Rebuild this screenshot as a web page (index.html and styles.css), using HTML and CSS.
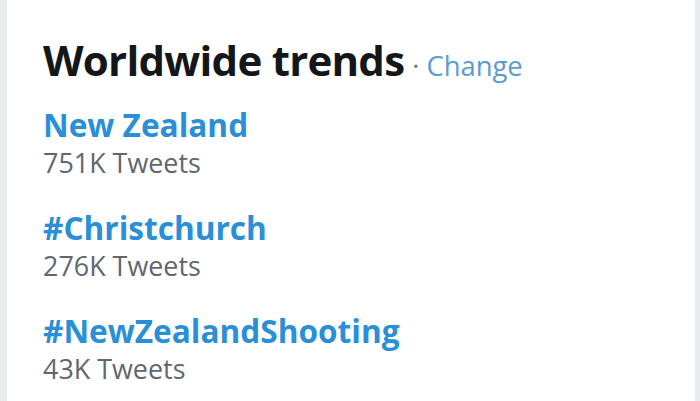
FILE: index.html
```html
<!DOCTYPE html>
<html lang="en">
<head>
    <meta charset="UTF-8">
    <title>Worldwide trends</title>
    <link rel="stylesheet" href="styles.css">
</head>
<body>
    <div class="card">
        <div class="card-header">
            <h2>Worldwide trends</h2>
            <span class="dot">·</span>
            <a class="change" href="#">Change</a>
        </div>
        <ul class="trends">
            <li class="trend">
                <a class="trend-name" href="#">New Zealand</a>
                <div class="trend-count">751K Tweets</div>
            </li>
            <li class="trend">
                <a class="trend-name" href="#">#Christchurch</a>
                <div class="trend-count">276K Tweets</div>
            </li>
            <li class="trend">
                <a class="trend-name" href="#">#NewZealandShooting</a>
                <div class="trend-count">43K Tweets</div>
            </li>
        </ul>
    </div>
</body>
</html>
```

FILE: styles.css
```css
* {
    margin: 0;
    padding: 0;
    box-sizing: border-box;
}

body {
    font-family: "Open Sans", "Noto Sans", sans-serif;
    background-color: #e6ecf0;
    height: 401px;
    overflow: hidden;
}

.card {
    background-color: #ffffff;
    margin: 0 5px 0 7px;
    height: 100%;
    padding: 36px 0 0 36px;
}

.card-header {
    display: flex;
    align-items: baseline;
    height: 70px;
}

.card-header h2 {
    font-size: 42px;
    font-weight: 700;
    color: #14171a;
    line-height: 48px;
    letter-spacing: -0.75px;
}

.dot {
    color: #657786;
    font-size: 27px;
    margin: 0 7px 0 8px;
}

.change {
    color: #5b9bd5;
    font-size: 27.4px;
    text-decoration: none;
}

.trends {
    list-style: none;
}

.trend {
    margin-bottom: 27px;
}

.trend-name {
    display: block;
    color: #2b8fd8;
    font-size: 31.6px;
    font-weight: 700;
    line-height: 38px;
    text-decoration: none;
}

.trend-count {
    color: #61676d;
    font-size: 26.9px;
    line-height: 38px;
}
```
